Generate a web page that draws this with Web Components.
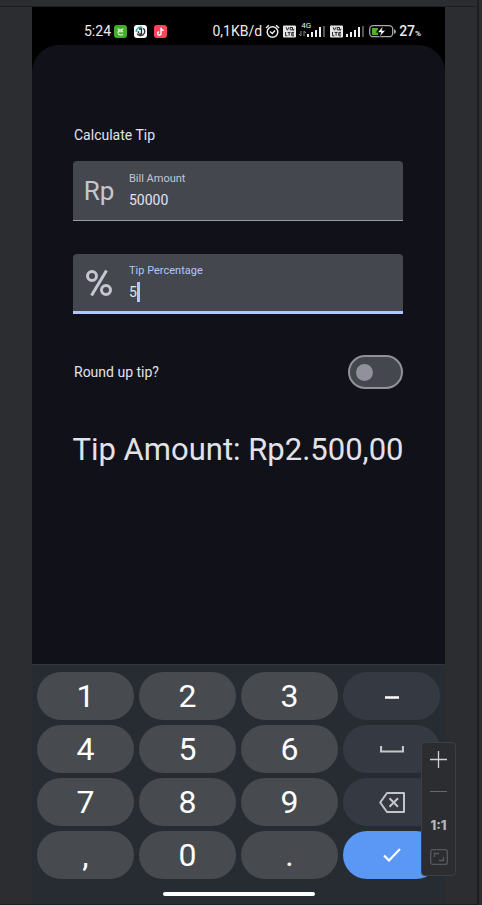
<!DOCTYPE html>
<html lang="en">
<head>
<meta charset="utf-8">
<title>Calculate Tip</title>
<style>
html, body { height: 100%; }
body { margin: 0; background: #2b2d30; font-family: Roboto, "Liberation Sans", sans-serif; }
</style>
</head>
<body>
<device-window></device-window>
<script>
function define(name, html, setup) {
  const template = document.createElement('template');
  template.innerHTML = '<style>*{box-sizing:border-box}svg{display:block;flex:none}</style>' + html;
  customElements.define(name, class extends HTMLElement {
    constructor() {
      super();
      this.attachShadow({ mode: 'open' }).append(template.content.cloneNode(true));
    }
    connectedCallback() { if (setup) setup(this, this.shadowRoot); }
  });
}

define('volte-badge', `
<style>:host{display:block}</style>
<svg width="13" height="13" viewBox="0 0 13 13" aria-hidden="true">
  <rect width="13" height="12" y=".5" rx="1" fill="#e8e8e8"/>
  <g fill="none" stroke="#222" stroke-width="1"><path d="M3 2.2l1.4 3L6 2.2M7.2 2.5h2.3v2.4H7.2zM2.6 7v3.8h1.800M4.600 7.400h3M6.100 7.400v3.400M11 7.400H8.800v3.400H11M8.800 9H11M10 5.800l1-2"/></g>
</svg>`);

define('signal-bars', `
<style>:host{display:block}</style>
<svg width="18" height="12" viewBox="0 0 18 12" aria-hidden="true">
  <g fill="#f0f0f0"><rect y="9" width="2" height="3"/><rect x="4" y="7" width="2" height="5"/><rect x="8" y="5" width="2" height="7"/><rect x="12" y="2" width="2" height="10"/></g>
  <rect x="16" y="1" width="2" height="11" fill="#555"/>
</svg>`);

define('status-bar', `
<style>
:host{display:flex;align-items:center;height:38px;padding:10px 24px 0 52px;color:#ececec;font-size:14px;line-height:16px;white-space:nowrap}
.apps{display:flex;gap:7px;margin-left:3px}
.right{display:flex;align-items:center;margin-left:auto;gap:3px}
.net{display:flex;position:relative;padding-left:8px}
.net span{position:absolute;left:2px;top:-3px;font-size:8px;line-height:8px}
.net svg{position:absolute;left:0;top:6px}
signal-bars{margin-right:2px}
.pct{display:flex;align-items:baseline;height:16px;font-weight:500}
.pct small{font-size:8px;line-height:8px;font-weight:700}
</style>
<span>5:24</span>
<span class="apps">
  <svg width="13" height="13" viewBox="0 0 13 13"><rect width="13" height="13" rx="3" fill="#45ad2c"/><path d="M4 3.2c0 2 5 2 5 0M4 6.8h4.6C8.5 4.4 4 4.7 4 7.5s3.4 3 5 1.7" fill="none" stroke="#d5f2cd" stroke-width="1.1"/></svg>
  <svg width="13" height="13" viewBox="0 0 13 13"><rect width="13" height="13" rx="3" fill="#fff"/><path d="M2.4 7a4.2 4.2 0 0 1 6-4.4" fill="none" stroke="#35aaa8" stroke-width="1.5"/><path d="M9.2 3.2a4.1 4.1 0 1 1-6 5.4" fill="none" stroke="#333" stroke-width="1.4"/><path d="M5 4h2.5v5H5.2M4.5 6.2v2" fill="none" stroke="#222" stroke-width="1.3"/></svg>
  <svg width="13" height="13" viewBox="0 0 13 13"><rect width="13" height="13" rx="3" fill="#fb4658"/><path d="M7 2.6v5.9a1.7 1.7 0 1 1-1.8-1.7M7 3c.2 1.5 1.2 2.3 2.8 2.4" fill="none" stroke="#fff" stroke-width="1.4"/></svg>
</span>
<span class="right">
  <span>0,1KB/d</span>
  <svg width="15" height="15" viewBox="0 0 15 15" fill="none" stroke="#ececec" stroke-width="1.5"><circle cx="7.5" cy="8" r="5.3"/><path d="M1 4l3-2.7M14 4l-3-2.7M5 7.5l2.3 2L10 6.5"/></svg>
  <volte-badge></volte-badge>
  <span class="net"><span>4G</span><svg width="7" height="6" viewBox="0 0 7 6"><path d="M2 0v5M0 3l2 2M5 5V0l2 2" fill="none" stroke="#888"/></svg><signal-bars></signal-bars></span>
  <volte-badge></volte-badge>
  <signal-bars></signal-bars>
  <svg width="27" height="13" viewBox="0 0 27 13"><rect x=".7" y=".7" width="23" height="11" rx="3.5" fill="none" stroke="#aaa" stroke-width="1.3"/><path d="M25 4v5q2-1 2-2.500T25 4z" fill="#aaa"/><path d="M3 3h6v1L7 7.500h2V10H3z" fill="#50b51c"/><path d="M14 1L8.500 7.500H12L10.500 12 16.500 5.500H13z" fill="#fff" stroke="#000" stroke-width=".6"/></svg>
  <span class="pct">27<small>%</small></span>
</span>`);

define('text-field', `
<style>
:host{display:block}
label{display:flex;align-items:center;height:60px;padding:0 10px;border-radius:4px 4px 0 0;background:#45474f;border-bottom:1px solid #9b9ca6;color:#c5c6d0;cursor:text}
.icon{width:32px;flex:none;display:flex;justify-content:center}
.text{flex:1;min-width:0;margin-left:14px}
.name{display:block;font-size:11px;line-height:16px}
.row{display:flex;align-items:center;height:22px;margin-top:2px}
input{flex:1;min-width:0;width:100%;padding:0;border:0;outline:0;background:none;color:#e2e2ea;font:14px/20px Roboto,"Liberation Sans",sans-serif}
i{display:none;width:3px;height:20px;background:#b0c6ff}
:host([active]) label{border-bottom:3px solid #b0c6ff}
:host([active]) .text{padding-top:1px}
:host([active]) .name{color:#b0c6ff}
:host([active]) input{flex:none;width:auto;field-sizing:content}
:host([active]) i{display:block}
</style>
<label><span class="icon"><slot></slot></span><span class="text"><span class="name"></span><span class="row"><input inputmode="numeric"><i></i></span></span></label>`,
(host, root) => {
  root.querySelector('.name').textContent = host.getAttribute('label');
  root.querySelector('input').value = host.getAttribute('value');
});

define('toggle-switch', `
<style>
:host{display:block}
input{appearance:none;display:flex;align-items:center;width:55px;height:34px;margin:0;padding:0 6px;border:2px solid #90919b;border-radius:17px;background:#45474f}
input::before{content:"";width:17px;height:17px;border-radius:50%;background:#90919b}
input:checked{justify-content:flex-end}
</style>
<input type="checkbox" role="switch" aria-label="Round up tip?">`);

define('tip-form', `
<style>
:host{display:block;flex:1;padding:80px 42px 0 41px;background:#11111a;border-radius:27px 27px 0 0;color:#e2e2ea}
h1{margin:0 0 16px 1px;font-size:14px;line-height:20px;font-weight:400}
text-field{margin-bottom:33px}
.rp{font-size:26px;line-height:32px}
.round{display:flex;align-items:center;justify-content:space-between;margin-top:41px;padding-left:1px;font-size:14px;line-height:20px}
output{display:flex;justify-content:center;margin-top:41px;font-size:31px;line-height:40px;white-space:nowrap}
</style>
<h1>Calculate Tip</h1>
<text-field label="Bill Amount" value="50000"><span class="rp">Rp</span></text-field>
<text-field label="Tip Percentage" value="5" active>
  <svg width="28" height="28" viewBox="0 0 28 28" fill="none" stroke="#c5c6d0" stroke-width="3" aria-hidden="true"><circle cx="7" cy="7" r="4.500"/><circle cx="21" cy="21" r="4.500"/><path d="M21.500 1.500L6.500 26.500"/></svg>
</text-field>
<div class="round"><span>Round up tip?</span><toggle-switch></toggle-switch></div>
<output>Tip Amount: Rp2.500,00</output>`);

define('pad-key', `
<style>
:host{display:block}
button{display:flex;align-items:center;justify-content:center;width:100%;height:48px;padding:0;border:0;border-radius:24px;background:#474a4e;color:#fff;font:32px/48px Roboto,"Liberation Sans",sans-serif}
:host([kind=side]) button{background:#353a42;color:#c8c9cb}
:host([kind=go]) button{background:#5b97f5}
</style>
<button type="button"><slot></slot></button>`,
(host, root) => {
  const label = host.getAttribute('label');
  if (label) root.querySelector('button').setAttribute('aria-label', label);
});

define('number-pad', `
<style>
:host{display:block;padding:7px 5px 8px;background:#272c33;border-top:1px solid #33373d}
.keys{display:grid;grid-template-columns:repeat(4,1fr);gap:5px}
.home{width:152px;height:4px;margin:13px auto 0;border-radius:2px;background:#fff}
</style>
<div class="keys">
<pad-key>1</pad-key><pad-key>2</pad-key><pad-key>3</pad-key>
<pad-key kind="side" label="Minus"><svg width="14" height="6" viewBox="0 0 14 6"><path d="M0 4.500h14" stroke="#fff" stroke-width="2.500"/></svg></pad-key>
<pad-key>4</pad-key><pad-key>5</pad-key><pad-key>6</pad-key>
<pad-key kind="side" label="Space"><svg width="24" height="7" viewBox="0 0 24 7"><path d="M1 0v5.500h22V0" fill="none" stroke="#c3c5c8" stroke-width="2.200"/></svg></pad-key>
<pad-key>7</pad-key><pad-key>8</pad-key><pad-key>9</pad-key>
<pad-key kind="side" label="Delete"><svg width="26" height="21" viewBox="0 0 26 21" fill="none" stroke="#c3c5c8" stroke-width="2"><path d="M8 1h17v19H8L1.200 10.500z" stroke-linejoin="round"/><path d="M10.500 6.200l8.500 8.500M19 6.200l-8.500 8.500"/></svg></pad-key>
<pad-key>,</pad-key><pad-key>0</pad-key><pad-key>.</pad-key>
<pad-key kind="go" label="Done"><svg width="18" height="14" viewBox="0 0 18 14"><path d="M1 7.500l5 5L17 1" fill="none" stroke="#fff" stroke-width="2.200"/></svg></pad-key>
</div>
<div class="home"></div>`);

define('zoom-tools', `
<style>
:host{display:flex;flex-direction:column;align-items:center;width:35px;padding:0 0 2px;border:1px solid #3d3f42;border-radius:4px;background:#2b2d30}
button{display:flex;align-items:center;justify-content:center;width:100%;height:32px;padding:0;border:0;background:none;color:#b4b6b9;font:800 13px/16px Inter,sans-serif}
button:first-child{height:34px}
button:nth-of-type(3){margin-top:2px}
</style>
<button type="button" aria-label="Zoom in"><svg width="17" height="17" viewBox="0 0 17 17"><path d="M0 8.500h17M8.500 0v17" stroke="#ced0d6" stroke-width="1.300"/></svg></button>
<button type="button" aria-label="Zoom out"><svg width="17" height="3" viewBox="0 0 17 3"><path d="M0 1.500h17" stroke="#66686b"/></svg></button>
<button type="button">1:1</button>
<button type="button" aria-label="Fit to screen"><svg width="18" height="16" viewBox="0 0 18 16" fill="none" stroke="#58595c" stroke-width="1.300"><rect x=".7" y=".7" width="16.600" height="14.600" rx="2"/><path d="M4.500 8V4.500H9M13.500 8v3.500H9"/></svg></button>`);

define('device-window', `
<style>
:host{display:grid;grid-template-columns:minmax(0,1fr) 2px 3px;grid-template-rows:1fr;position:relative;min-height:100vh;background:#2b2d30;border-bottom:2px solid #2b2d30}
.view{display:flex;border-top:1px solid #1e1f22;border-bottom:1px solid #1e1f22;margin-top:6px;padding:0 32px}
.phone{flex:1;min-width:0;display:flex;flex-direction:column;background:#000}
.edge{background:#1e1f22}
zoom-tools{position:absolute;right:26px;bottom:29px}
</style>
<div class="view"><div class="phone"><status-bar></status-bar><tip-form></tip-form><number-pad></number-pad></div></div>
<div class="edge"></div>
<zoom-tools></zoom-tools>`);
</script>
</body>
</html>
